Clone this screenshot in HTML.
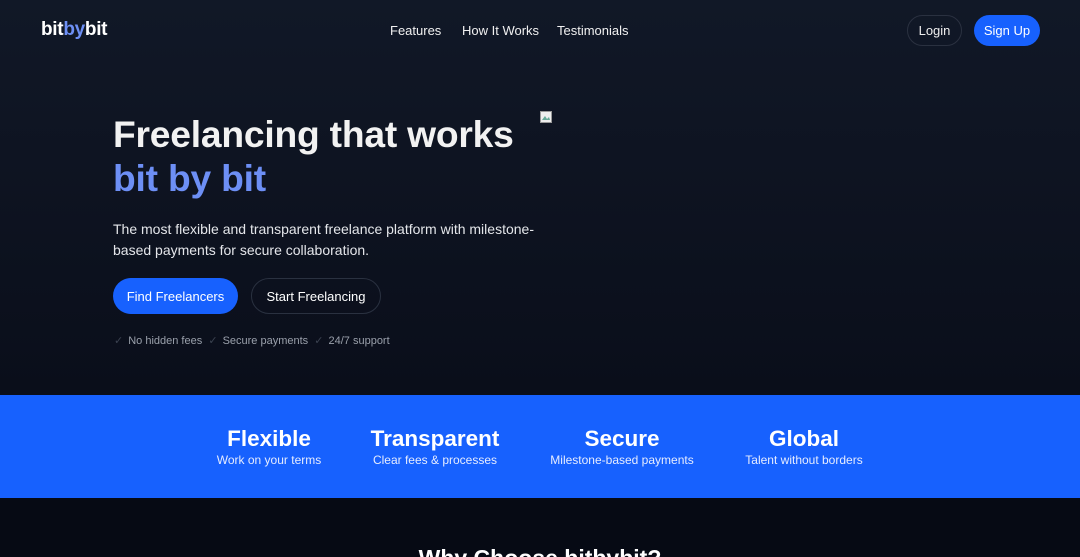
<!DOCTYPE html>
<html><head><style>
*{margin:0;padding:0;box-sizing:border-box}
html,body{width:1080px;height:557px;overflow:hidden}
body{position:relative;font-family:"Liberation Sans",sans-serif;background:#060a14;color:#fff}
.hero{position:absolute;left:0;top:0;width:1080px;height:395px;background:linear-gradient(#111827,#0a0e1a)}
.logo{position:absolute;left:41px;top:19px;font-size:19px;font-weight:bold;letter-spacing:-0.3px}
.logo span{color:#6d8ff5}
.nav{position:absolute;top:23px;font-size:13px;color:#f0f0f0}
.btn{position:absolute;border-radius:18px;font-size:13px;display:flex;align-items:center;justify-content:center}
h1{position:absolute;left:113px;top:112px;font-size:37.2px;line-height:44px;font-weight:bold;color:#f2f2f2;letter-spacing:-0.2px}
h1 span{color:#6d8ff5}
p.d{position:absolute;left:113px;top:219px;font-size:14px;line-height:20.5px;color:#e4e6ea;width:430px}
.checks{position:absolute;left:114px;top:334px;font-size:11px;color:#9aa0ab}
.checks b{font-weight:normal;color:#3b4250;margin-right:5px}
.band{position:absolute;left:0;top:395px;width:1080px;height:103px;background:#1761fe}
.f{position:absolute;top:426px;text-align:center;transform:translateX(-50%);white-space:nowrap}
.f h3{font-size:22.5px;line-height:26px;font-weight:bold}
.f div{font-size:12px;color:#e6ecff;margin-top:1px}
.why{position:absolute;left:0;width:1080px;top:545px;text-align:center;font-size:23px;font-weight:bold}
</style></head><body>
<div class="hero"></div>
<div class="logo">bit<span>by</span>bit</div>
<div class="nav" style="left:390px">Features</div>
<div class="nav" style="left:462px">How It Works</div>
<div class="nav" style="left:557px">Testimonials</div>
<div class="btn" style="left:907px;top:15px;width:55px;height:31px;border:1px solid #2a3140;color:#eee">Login</div>
<div class="btn" style="left:974px;top:15px;width:66px;height:31px;background:#1761fe">Sign Up</div>
<svg style="position:absolute;left:540px;top:111px" width="12" height="12"><rect x="0.5" y="0.5" width="11" height="11" fill="#eee" stroke="#999"/><path d="M2 9l3-4 2 3 2-2 1 3z" fill="#6a9"/></svg>
<h1>Freelancing that works<br><span>bit by bit</span></h1>
<p class="d">The most flexible and transparent freelance platform with milestone-based payments for secure collaboration.</p>
<div class="btn" style="left:113px;top:278px;width:125px;height:36px;background:#1761fe">Find Freelancers</div>
<div class="btn" style="left:251px;top:278px;width:130px;height:36px;border:1px solid #2a3140">Start Freelancing</div>
<div class="checks"><b>✓</b>No hidden fees &nbsp;<b>✓</b>Secure payments &nbsp;<b>✓</b>24/7 support</div>
<div class="band"></div>
<div class="f" style="left:269px"><h3>Flexible</h3><div>Work on your terms</div></div>
<div class="f" style="left:435px"><h3>Transparent</h3><div>Clear fees &amp; processes</div></div>
<div class="f" style="left:622px"><h3>Secure</h3><div>Milestone-based payments</div></div>
<div class="f" style="left:804px"><h3>Global</h3><div>Talent without borders</div></div>
<div class="why">Why Choose bitbybit?</div>
</body></html>
